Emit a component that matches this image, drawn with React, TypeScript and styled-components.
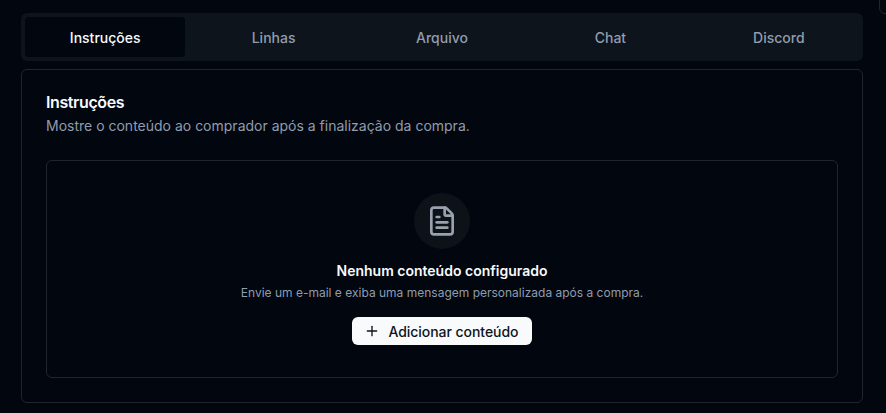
import React from "react";
import styled, { createGlobalStyle } from "styled-components";
import { FileText, Plus } from "lucide-react";

const TABS = ["Instruções", "Linhas", "Arquivo", "Chat", "Discord"];

const GlobalStyle = createGlobalStyle`
  html, body {
    margin: 0;
    padding: 0;
    height: 100%;
    background: #01060f;
    overflow: hidden;
  }

  * {
    box-sizing: border-box;
  }
`;

const Page = styled.div`
  position: relative;
  width: 886px;
  height: 413px;
  overflow: hidden;
  padding: 13px 23px 10px 21px;
  display: flex;
  flex-direction: column;
  gap: 8px;
  font-family: Inter, "Liberation Sans", sans-serif;
  background: #01060f;
`;

/* corner of the neighbouring panel, clipped by the window */
const PanelCorner = styled.div`
  position: absolute;
  top: -20px;
  left: 879px;
  width: 40px;
  height: 34px;
  border: 1px solid #20252e;
  border-radius: 6px;
`;

const TabList = styled.div`
  display: grid;
  grid-template-columns: repeat(5, 1fr);
  gap: 8px;
  height: 48px;
  padding: 4px;
  background: #0d141c;
  border-radius: 6px;
`;

const Tab = styled.button<{ $active?: boolean }>`
  border: none;
  border-radius: 4px;
  font-family: inherit;
  font-size: 14px;
  font-weight: 500;
  color: ${(p) => (p.$active ? "#f8fafc" : "#909dae")};
  background: ${(p) => (p.$active ? "#01060f" : "transparent")};
`;

const Card = styled.section`
  flex: 1;
  display: flex;
  flex-direction: column;
  padding: 24px;
  border: 1px solid #20252e;
  border-radius: 6px;
`;

const Title = styled.h2`
  margin: 0;
  font-size: 16px;
  line-height: 16px;
  font-weight: 600;
  letter-spacing: -0.025em;
  color: #f8fafc;
`;

const Subtitle = styled.p`
  margin: 6px 0 0;
  font-size: 14px;
  line-height: 20px;
  color: #909dae;
`;

const EmptyBox = styled.div`
  flex: 1;
  margin-top: 24px;
  display: flex;
  flex-direction: column;
  align-items: center;
  padding-top: 32px;
  border: 1px solid #20252e;
  border-radius: 6px;
`;

const IconCircle = styled.div`
  width: 56px;
  height: 56px;
  display: flex;
  align-items: center;
  justify-content: center;
  border-radius: 50%;
  background: #0d1219;
  color: #98a1ad;
`;

const EmptyTitle = styled.h3`
  margin: 12px 0 0;
  font-size: 14px;
  line-height: 20px;
  font-weight: 600;
  color: #f8fafc;
`;

const EmptyText = styled.p`
  margin: 4px 0 0;
  font-size: 12px;
  line-height: 16px;
  color: #909dae;
`;

const AddButton = styled.button`
  margin-top: 16px;
  height: 28px;
  padding: 0 13px 0 12px;
  display: flex;
  align-items: center;
  gap: 8px;
  border: none;
  border-radius: 6px;
  background: #f8fafc;
  color: #0d141c;
  font-family: inherit;
  font-size: 14px;
  font-weight: 500;
  letter-spacing: -0.05px;
  white-space: nowrap;
`;

const App = () => (
  <>
    <GlobalStyle />
    <Page>
      <PanelCorner />
      <TabList>
        {TABS.map((tab, i) => (
          <Tab key={tab} $active={i === 0}>
            {tab}
          </Tab>
        ))}
      </TabList>
      <Card>
        <Title>Instruções</Title>
        <Subtitle>Mostre o conteúdo ao comprador após a finalização da compra.</Subtitle>
        <EmptyBox>
          <IconCircle>
            <FileText size={32} strokeWidth={2} />
          </IconCircle>
          <EmptyTitle>Nenhum conteúdo configurado</EmptyTitle>
          <EmptyText>Envie um e-mail e exiba uma mensagem personalizada após a compra.</EmptyText>
          <AddButton>
            <Plus size={16} />
            Adicionar conteúdo
          </AddButton>
        </EmptyBox>
      </Card>
    </Page>
  </>
);

export default App;
